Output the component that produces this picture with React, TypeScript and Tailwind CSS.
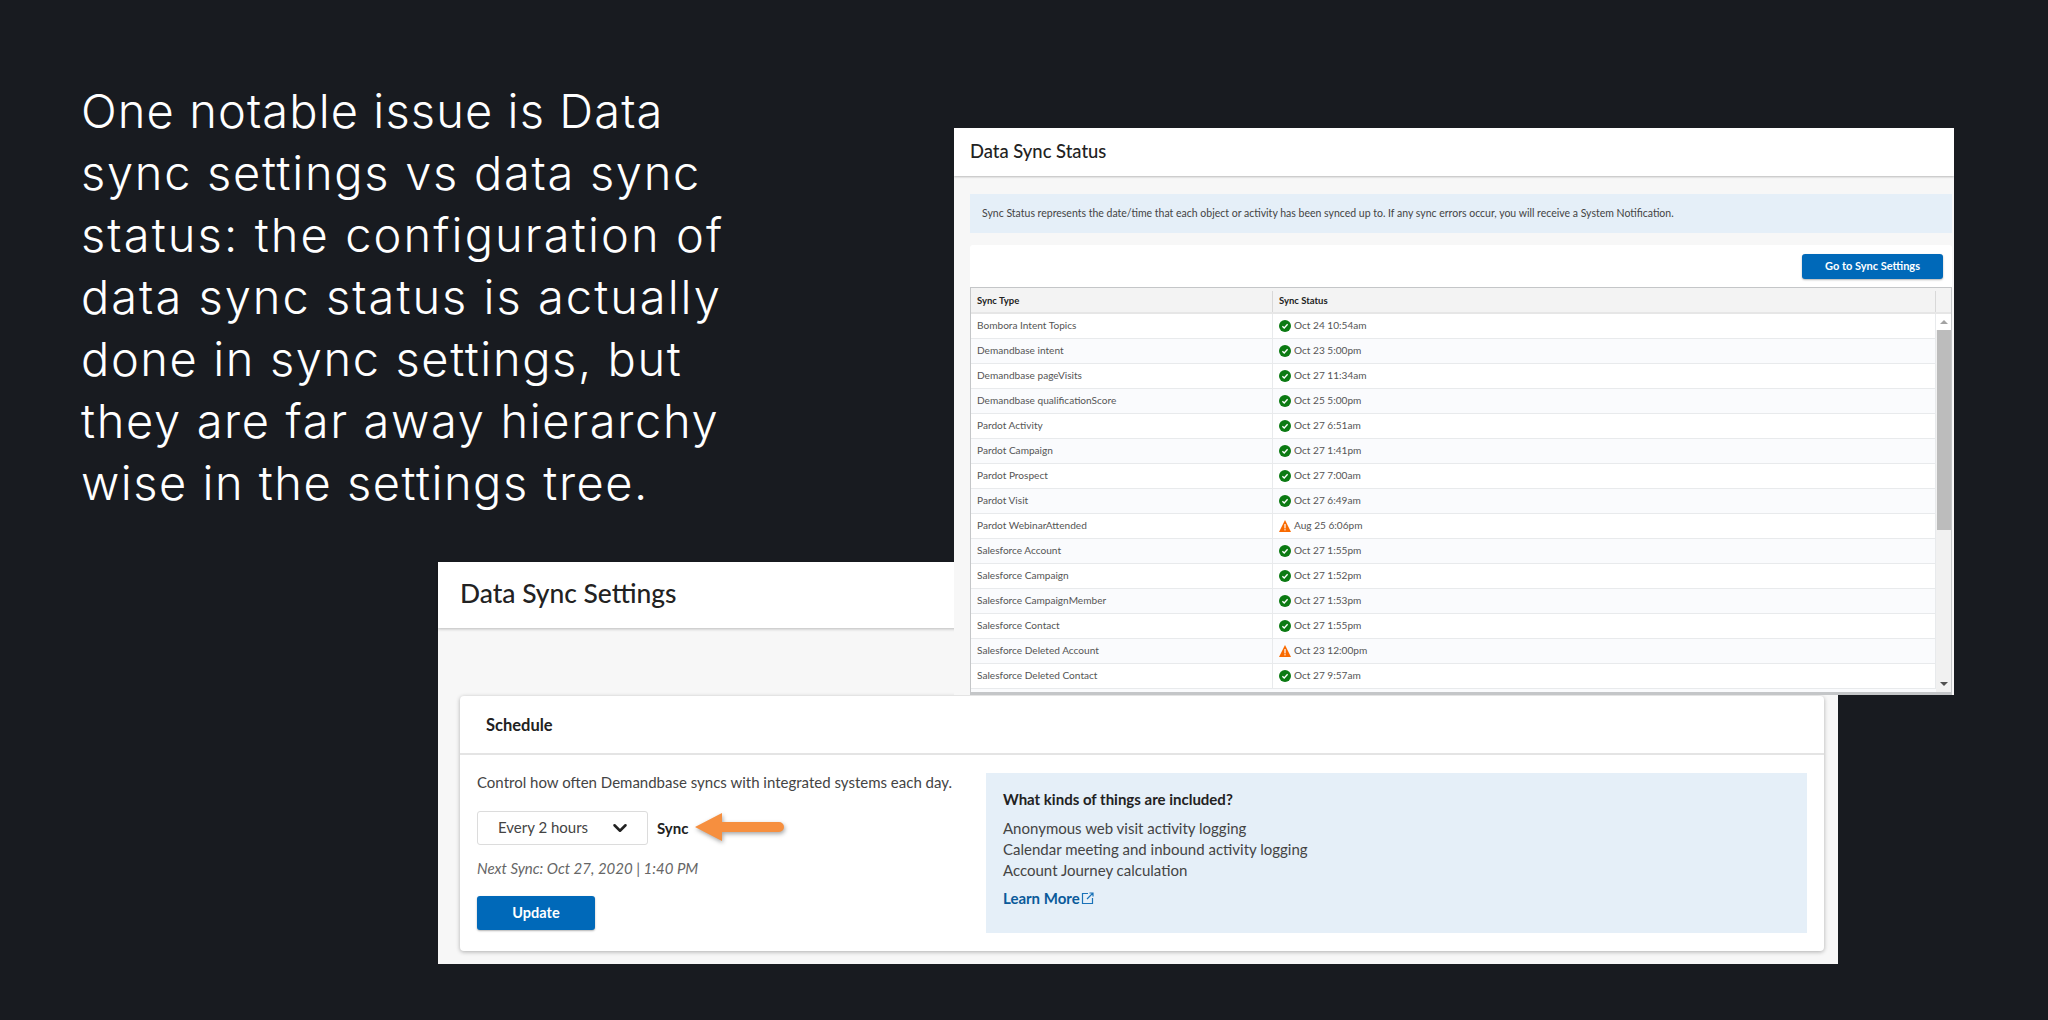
import { ChevronDown } from "lucide-react";

const introLines = [
  { text: "One notable issue is Data", tracking: "tracking-[1.1px]" },
  { text: "sync settings vs data sync", tracking: "tracking-[1.7px]" },
  { text: "status: the configuration of", tracking: "tracking-[2.1px]" },
  { text: "data sync status is actually", tracking: "tracking-[2px]" },
  { text: "done in sync settings, but", tracking: "tracking-[1.6px]" },
  { text: "they are far away hierarchy", tracking: "tracking-[1.65px]" },
  { text: "wise in the settings tree.", tracking: "tracking-[1.5px]" },
];

const syncRows = [
  { type: "Bombora Intent Topics", status: "Oct 24 10:54am" },
  { type: "Demandbase intent", status: "Oct 23 5:00pm" },
  { type: "Demandbase pageVisits", status: "Oct 27 11:34am" },
  { type: "Demandbase qualificationScore", status: "Oct 25 5:00pm" },
  { type: "Pardot Activity", status: "Oct 27 6:51am" },
  { type: "Pardot Campaign", status: "Oct 27 1:41pm" },
  { type: "Pardot Prospect", status: "Oct 27 7:00am" },
  { type: "Pardot Visit", status: "Oct 27 6:49am" },
  { type: "Pardot WebinarAttended", status: "Aug 25 6:06pm", warn: true },
  { type: "Salesforce Account", status: "Oct 27 1:55pm" },
  { type: "Salesforce Campaign", status: "Oct 27 1:52pm" },
  { type: "Salesforce CampaignMember", status: "Oct 27 1:53pm" },
  { type: "Salesforce Contact", status: "Oct 27 1:55pm" },
  { type: "Salesforce Deleted Account", status: "Oct 23 12:00pm", warn: true },
  { type: "Salesforce Deleted Contact", status: "Oct 27 9:57am" },
];

const CheckIcon = () => (
  <svg width="12" height="12" viewBox="0 0 12 12" className="shrink-0">
    <circle cx="6" cy="6" r="6" fill="#0b7a12" />
    <path d="M3.4 6.2 5.2 8l3.4-3.8" fill="none" stroke="#fff" strokeWidth="1.3" />
  </svg>
);

const WarnIcon = () => (
  <svg width="12" height="12" viewBox="0 0 12 12" className="shrink-0">
    <path d="M6 0 12 12H0Z" fill="#f96a00" />
    <rect x="5.4" y="4" width="1.2" height="4.4" fill="#fff" />
    <rect x="5.4" y="9.2" width="1.2" height="1.2" fill="#fff" />
  </svg>
);

function SyncTable() {
  return (
    <div className="flex h-[408px] flex-col overflow-hidden border-t border-b-[3px] border-l border-r border-[#c4c6c8]">
      <div className="flex h-[26px] shrink-0 border-b-2 border-[#e6e6e6] bg-[#f3f3f3] pt-[3px] text-[9.5px] font-bold text-[#222]">
        <div className="flex w-[302px] items-center border-r border-[#d8d8d8] pl-[6px]">Sync Type</div>
        <div className="flex flex-1 items-center border-r border-[#d8d8d8] pl-[6px]">Sync Status</div>
        <div className="w-[15px]" />
      </div>
      <div className="flex min-h-0 flex-1">
        <div className="min-w-0 flex-1 overflow-hidden">
          {syncRows.map((row, i) => (
            <div
              key={row.type}
              className={
                i % 2 === 0
                  ? "flex h-[25px] border-b border-[#e8eaec] bg-white text-[10.1px] text-[#555]"
                  : "flex h-[25px] border-b border-[#e8eaec] bg-[#fafbfd] text-[10.1px] text-[#555]"
              }
            >
              <div className="flex w-[302px] items-center border-r border-[#e8eaec] pl-[6px]">{row.type}</div>
              <div className="flex flex-1 items-center gap-[3px] border-r border-[#e8eaec] pl-[6px]">
                {row.warn ? <WarnIcon /> : <CheckIcon />}
                <span>{row.status}</span>
              </div>
            </div>
          ))}
          <div className="h-1 bg-[#fafbfd]" />
        </div>
        <div className="flex w-[15px] shrink-0 flex-col items-center bg-[#f1f1f1]">
          <div className="flex h-[16px] w-full items-center justify-center bg-white">
            <div className="h-0 w-0 border-x-[4px] border-b-[4px] border-x-transparent border-b-[#a3a3a3]" />
          </div>
          <div className="h-[200px] w-[14px] bg-[#bcbcbc]" />
          <div className="flex-1" />
          <div className="flex h-[16px] w-full items-center justify-center">
            <div className="h-0 w-0 border-x-[4px] border-t-[4px] border-x-transparent border-t-[#505050]" />
          </div>
        </div>
      </div>
    </div>
  );
}

function StatusPanel() {
  return (
    <section className="absolute left-[954px] top-[128px] z-10 flex h-[567px] w-[1000px] flex-col overflow-hidden bg-[#f7f7f7] font-['Lato',sans-serif]">
      <header className="flex h-[48px] shrink-0 items-center bg-white pl-[16px] text-[18.4px] font-medium text-[#222] shadow-[0_1px_2px_rgba(0,0,0,0.25)]">
        Data Sync Status
      </header>
      <div className="ml-[16px] mr-[2px] mt-[18px] flex h-[39px] shrink-0 items-center bg-[#e5eff8] pl-[12px] text-[10.5px] text-[#444]">
        Sync Status represents the date/time that each object or activity has been synced up to. If any sync errors occur, you will receive a System Notification.
      </div>
      <div className="ml-[16px] mr-[2px] mt-[12px] flex-1 rounded-t-[3px] bg-white">
        <div className="flex h-[42px] items-start justify-end pr-[9px] pt-[9px]">
          <button className="h-[25px] w-[141px] rounded-[3px] bg-[#0069b9] text-[11px] font-bold text-white shadow-[0_1px_2px_rgba(0,0,0,0.3)]">
            Go to Sync Settings
          </button>
        </div>
        <SyncTable />
      </div>
    </section>
  );
}

function SettingsPanel() {
  return (
    <section className="absolute left-[438px] top-[562px] flex h-[402px] w-[1400px] flex-col bg-[#f7f7f7] font-['Lato',sans-serif]">
      <header className="flex h-[66px] shrink-0 items-center bg-white pb-[3px] pl-[22px] text-[26.4px] font-medium text-[#222] shadow-[0_1px_3px_rgba(0,0,0,0.25)]">
        Data Sync Settings
      </header>
      <div className="ml-[22px] mt-[68px] h-[255px] w-[1364px] rounded-[4px] bg-white shadow-[0_1px_4px_rgba(0,0,0,0.3)]">
        <div className="flex h-[59px] items-center border-b-2 border-[#e4e4e4] pl-[26px] pt-[2px] text-[16.5px] font-bold text-[#222]">
          Schedule
        </div>
        <div className="flex pl-[17px] pt-[17px]">
          <div className="w-[509px] text-[#444]">
            <p className="text-[15px] leading-[20px]">Control how often Demandbase syncs with integrated systems each day.</p>
            <div className="mt-[18px] flex items-center">
              <div className="flex h-[34px] w-[171px] items-center justify-between rounded-[3px] border border-[#dcdcdc] bg-white pb-[2px] pl-[20px] pr-[16px] text-[15px]">
                Every 2 hours
                <ChevronDown size={22} strokeWidth={2.8} className="mt-[2px] text-[#222]" />
              </div>
              <span className="ml-[9px] text-[15px] font-bold text-[#222]">Sync</span>
              <svg width="94" height="36" viewBox="0 0 94 36" className="ml-[5px] drop-shadow-[1px_2px_2px_rgba(0,0,0,0.35)]">
                <path d="M2 17 29 3V12H86a5 5 0 0 1 0 10H29V31Z" fill="#f68f3f" />
              </svg>
            </div>
            <p className="mt-[12px] text-[15px] italic leading-[20px] text-[#666]">Next Sync: Oct 27, 2020 | 1:40 PM</p>
            <button className="mt-[18px] h-[34px] w-[118px] rounded-[3px] bg-[#0069b9] text-[14.5px] font-bold text-white shadow-[0_1px_2px_rgba(0,0,0,0.3)]">
              Update
            </button>
          </div>
          <div className="mt-[1px] h-[160px] w-[821px] bg-[#e5eff8] pl-[17px] pt-[16px] text-[15px] text-[#444]">
            <p className="font-bold leading-[20px] text-[#222]">What kinds of things are included?</p>
            <ul className="mt-[9px] leading-[21px]">
              <li>Anonymous web visit activity logging</li>
              <li>Calendar meeting and inbound activity logging</li>
              <li>Account Journey calculation</li>
            </ul>
            <a className="mt-[7px] flex items-center gap-[1px] font-bold leading-[20px] text-[#0a5a9a]">
              Learn More
              <svg width="13" height="13" viewBox="0 0 13 13" fill="none" stroke="#1a72b8" strokeWidth="1.2">
                <path d="M7 1.5H1.5v10h10V6M6 7l6-6M8.5 1H12v3.5" />
              </svg>
            </a>
          </div>
        </div>
      </div>
    </section>
  );
}

export default function App() {
  return (
    <div className="relative h-[1020px] w-[2048px] overflow-hidden bg-[#181b20]">
      <div className="pl-[81px] pt-[80px] font-['Inter',sans-serif] text-[47px] font-light leading-[62px] text-white">
        {introLines.map((line) => (
          <div key={line.text} className={`whitespace-nowrap ${line.tracking}`}>{line.text}</div>
        ))}
      </div>
      <SettingsPanel />
      <StatusPanel />
    </div>
  );
}
